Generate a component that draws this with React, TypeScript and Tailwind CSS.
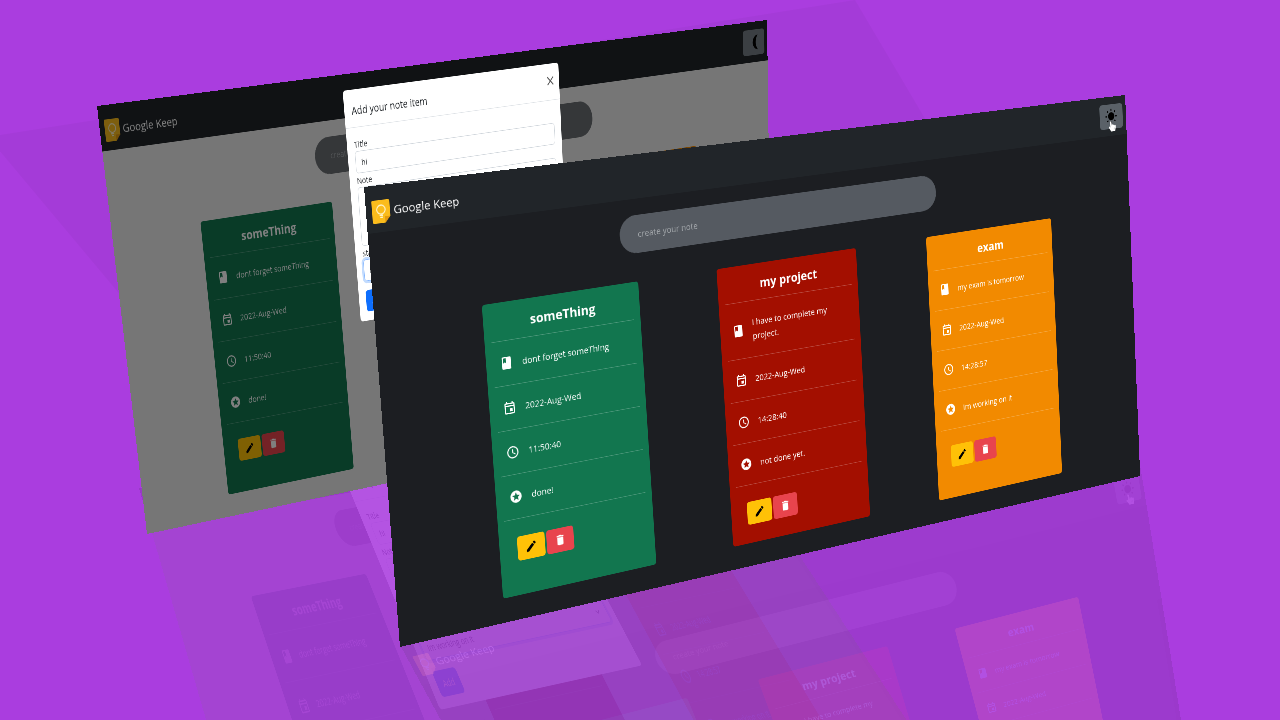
import { MdBook, MdDelete, MdEdit, MdOutlineAccessTime, MdOutlineEvent, MdStars, MdClose, MdKeyboardArrowDown, MdWbSunny } from 'react-icons/md'
import { FaHandPointer } from 'react-icons/fa'

type Pt = [number, number]
type Quad = [Pt, Pt, Pt, Pt]

// every window below is laid out at this size, then warped onto a quad of the picture
const W = 1536
const H = 730

// corners go TL, TR, BR, BL
function warp([p0, p1, p2, p3]: Quad) {
  const dx1 = p1[0] - p2[0]
  const dx2 = p3[0] - p2[0]
  const sx = p0[0] - p1[0] + p2[0] - p3[0]
  const dy1 = p1[1] - p2[1]
  const dy2 = p3[1] - p2[1]
  const sy = p0[1] - p1[1] + p2[1] - p3[1]
  const det = dx1 * dy2 - dx2 * dy1
  const g = (sx * dy2 - dx2 * sy) / det
  const h = (dx1 * sy - sx * dy1) / det
  const a = p1[0] - p0[0] + g * p1[0]
  const b = p3[0] - p0[0] + h * p3[0]
  const d = p1[1] - p0[1] + g * p1[1]
  const e = p3[1] - p0[1] + h * p3[1]
  const m = [a / W, d / W, 0, g / W, b / H, e / H, 0, h / H, 0, 0, 1, 0, p0[0], p0[1], 0, 1]
  return `matrix3d(${m.join(',')})`
}

const notes = [
  { title: 'someThing', text: 'dont forget someThing', time: '11:50:40', status: 'done!', bg: 'bg-[#12764f]' },
  { title: 'my project', text: 'I have to complete my project.', time: '14:28:40', status: 'not done yet.', bg: 'bg-[#a30f00]' },
  { title: 'exam', text: 'my exam is tomorrow', time: '14:28:57', status: 'Im working on it', bg: 'bg-[#f28a00]' },
]

function KeepLogo() {
  return (
    <svg width="30" height="36" viewBox="0 0 30 36">
      <path d="M2 0h26a2 2 0 0 1 2 2v24l-9 10H2a2 2 0 0 1-2-2V2a2 2 0 0 1 2-2z" fill="#fbbc1c" />
      <path d="M21 36v-10h9z" fill="#e59a0c" />
      <circle cx="15" cy="15" r="7" fill="none" stroke="#fff3c8" strokeWidth="1.8" />
      <path d="M12 24h6M13 27h4" stroke="#fff3c8" strokeWidth="1.8" />
    </svg>
  )
}

function Row({ icon, children }: { icon: React.ReactNode; children: React.ReactNode }) {
  return (
    <div className="flex items-center gap-4 border-b border-white/25 py-6 pl-3 pr-2 text-[15px] leading-6 text-white">
      <span className="shrink-0 text-[24px]">{icon}</span>
      <span>{children}</span>
    </div>
  )
}

function NoteCard({ note }: { note: (typeof notes)[number] }) {
  return (
    <div className={`flex flex-col rounded-[5px] px-3 ${note.bg}`}>
      <div className="flex h-[63px] items-center justify-center border-b border-white/25 pt-1 text-[22px] font-bold text-white">
        {note.title}
      </div>
      <Row icon={<MdBook />}>{note.text}</Row>
      <Row icon={<MdOutlineEvent />}>2022-Aug-Wed</Row>
      <Row icon={<MdOutlineAccessTime />}>{note.time}</Row>
      <Row icon={<MdStars />}>{note.status}</Row>
      <div className="ml-[20px] mt-[29px] flex gap-[3px]">
        <span className="flex h-[40px] w-[50px] items-center justify-center rounded-[5px] bg-[#ffc107] text-[22px] text-black">
          <MdEdit />
        </span>
        <span className="flex h-[40px] w-[50px] items-center justify-center rounded-[5px] bg-[#e8444d] text-[22px] text-white">
          <MdDelete />
        </span>
      </div>
    </div>
  )
}

function AddModal() {
  return (
    <div className="absolute left-[513px] top-[27px] w-[497px] rounded-md bg-white text-[#212529]">
      <div className="flex h-[64px] items-center justify-between border-b border-[#dee2e6] pl-4 pr-2 pt-2">
        <span className="text-[19px]">Add your note item</span>
        <MdClose className="mb-3 text-[26px] text-[#555]" />
      </div>
      <div className="p-4 text-[15px] leading-6">
        <div>Title</div>
        <div className="flex h-[38px] items-center rounded-md border border-[#ced4da] px-3">hi</div>
        <div>Note</div>
        <div className="h-[102px] rounded-md border border-[#ced4da]" />
        <div>status</div>
        <div className="flex h-[38px] items-center justify-between rounded-md border border-[#86b7fe] px-3 shadow-[0_0_0_4px_rgba(13,110,253,0.25)]">
          Im working on it
          <MdKeyboardArrowDown className="text-[18px]" />
        </div>
        <div className="mt-4 flex h-[38px] w-[56px] items-center justify-center rounded-md bg-[#0d6efd] text-white">Add</div>
      </div>
    </div>
  )
}

function KeepWindow({ corners, dimmed, opacity }: { corners: Quad; dimmed?: boolean; opacity?: number }) {
  return (
    <div
      className={`absolute left-0 top-0 flex h-[730px] w-[1536px] origin-top-left flex-col font-['Open_Sans',sans-serif] ${dimmed ? 'bg-[#ececec]' : 'bg-[#1c1e22]'}`}
      style={{ transform: warp(corners), opacity }}
    >
      <div className="flex h-[73px] items-center justify-between bg-[#212529] pl-[10px] pr-2">
        <div className="flex items-center gap-[6px] pt-[8px] text-[19px] text-white">
          <KeepLogo />
          Google Keep
        </div>
        <div className={`relative flex h-[46px] w-[56px] items-center justify-center rounded-md text-black ${dimmed ? 'bg-[#767e86]' : 'bg-[#5a6168]'}`}>
          {dimmed ? (
            <svg width="36" height="30" viewBox="0 0 30 24">
              <path d="M24 1A11 11 0 1 0 24 23A16 16 0 0 1 24 1Z" fill="#000" />
            </svg>
          ) : (
            <MdWbSunny className="text-[30px]" />
          )}
          {!dimmed && <FaHandPointer className="absolute left-[20px] top-[32px] text-[19px] text-white" />}
        </div>
      </div>
      <div className={`ml-[441px] mt-[27px] flex h-[63px] w-[646px] items-center rounded-full pl-[34px] text-[15px] text-[#a3a7ab] ${dimmed ? 'bg-[#6a6e72]' : 'bg-[#555a61]'}`}>
        create your note
      </div>
      <div className="ml-[184px] mt-[47px] grid h-[480px] w-[1162px] grid-cols-3 gap-[152px]">
        {notes.map((note) => (
          <NoteCard key={note.title} note={note} />
        ))}
      </div>
      {dimmed && (
        <>
          <div className="absolute inset-0 bg-black/50" />
          <AddModal />
          {/* mouse pointer, only seen in the mirror image */}
          <svg className="absolute left-[600px] top-[452px]" width="20" height="26" viewBox="0 0 20 26">
            <path d="M1 1v20l5-5 4 9 3-1-4-9h7z" fill="#fff" stroke="#000" />
          </svg>
        </>
      )}
    </div>
  )
}

const frontQuad: Quad = [[364, 187], [1125, 95], [1140, 476], [400, 647]]
const backQuad: Quad = [[97, 106], [767, 20], [772, 402], [147, 534]]
const frontMirror: Quad = [[400, 645], [1140, 465], [1195, 808], [585, 985]]
const backMirror: Quad = [[139, 488], [692, 390], [978, 830], [290, 1010]]

export default function App() {
  return (
    <div className="relative h-[720px] w-[1280px] overflow-hidden bg-[#aa3ddf]">
      <svg className="absolute left-0 top-0" width="1280" height="720">
        <polygon points="-12,137 855,0 1091,400 200,390" fill="#000" fillOpacity="0.03" />
      </svg>
      <KeepWindow corners={backMirror} dimmed opacity={0.12} />
      <KeepWindow corners={frontMirror} opacity={0.1} />
      <KeepWindow corners={backQuad} dimmed />
      <KeepWindow corners={frontQuad} />
    </div>
  )
}
